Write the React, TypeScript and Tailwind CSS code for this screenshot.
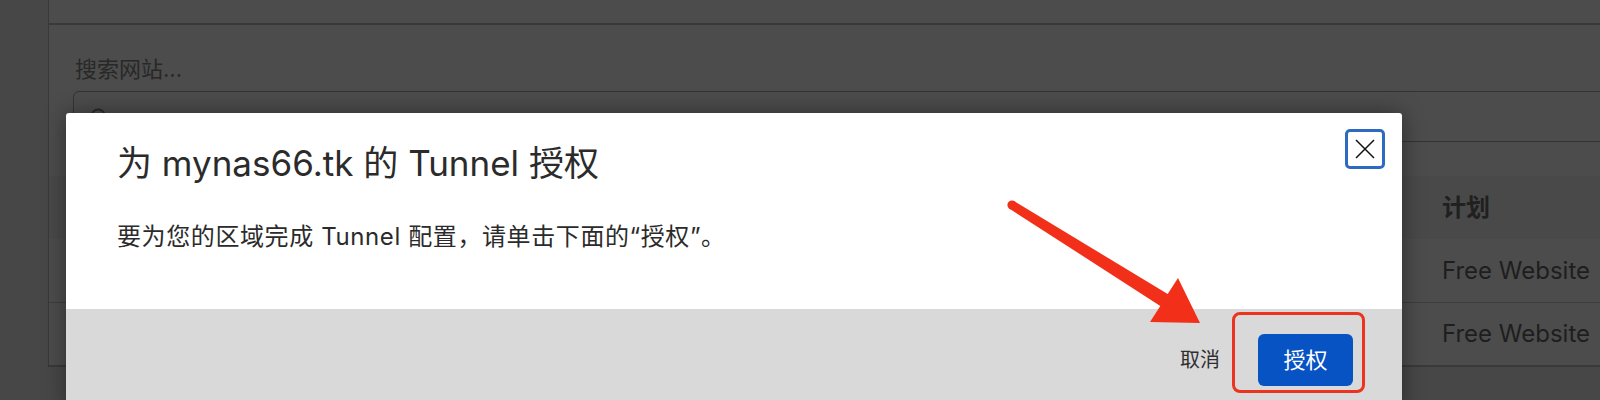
import { Search } from 'lucide-react';

const font = { fontFamily: 'Inter, "Noto Sans CJK SC", sans-serif' };

const rows = ['Free Website', 'Free Website'];

const Arrow = () => (
  <svg
    className="absolute left-[1000px] top-[190px]"
    width="210"
    height="140"
    viewBox="1000 190 210 140"
  >
    <circle cx="1012" cy="205" r="4.6" fill="#f2301a" />
    <polygon
      points="1014.4,201.2 1167.7,294.1 1178,278 1200,323 1150,322 1160.3,305.9 1009.6,208.8"
      fill="#f2301a"
    />
  </svg>
);

const CloseIcon = () => (
  <svg width="20" height="20" viewBox="0 0 20 20" fill="none">
    <path d="M1 1L19 19M19 1L1 19" stroke="#111" strokeWidth="1.5" />
  </svg>
);

export default function App() {
  return (
    <div className="relative h-[400px] w-[1600px] overflow-hidden bg-[#474747]" style={font}>
      {/* page behind the overlay */}
      <div className="w-[1640px] pl-12">
        <div className="h-[25px] border-b-2 border-l border-[#393939] bg-[#4c4c4c]" />
        <div className="h-[342px] border-b-2 border-l border-[#393939] bg-[#4c4c4c] pt-[29px]">
          <p className="pl-[26px] text-[22px] leading-[30px] text-[#282828]">搜索网站...</p>
          <div className="ml-6 mt-[7px] flex h-[51px] items-center rounded-md border border-[#333] pl-[15px]">
            <Search size={20} strokeWidth={2.2} className="text-[#2a2a2a]" />
          </div>
          <div className="mt-[34px]">
            <div className="grid h-[63px] grid-cols-[1393px_1fr] items-center bg-[#494949]">
              <div />
              <span className="text-[24px] font-bold text-[#202020]">计划</span>
            </div>
            {rows.map((r, i) => (
              <div
                key={i}
                className={`grid h-[63px] grid-cols-[1393px_1fr] items-center ${i > 0 ? 'border-t border-[#3d3d3d]' : ''}`}
              >
                <div />
                <span className="whitespace-nowrap text-[24px] text-[#1e1e1e]">{r}</span>
              </div>
            ))}
          </div>
        </div>
      </div>

      {/* dialog */}
      <div className="absolute left-[66px] top-[113px] w-[1336px] rounded-t-[3px] bg-white shadow-[0_0_22px_rgba(0,0,0,0.4)]">
        <div className="relative h-[196px] pl-[51px] pt-[29px]">
          <h2 className="text-[35px] leading-[42px] text-[#2b2b2b]">为 mynas66.tk 的 Tunnel 授权</h2>
          <p className="mt-[38px] text-[24px] leading-[30px] tracking-[0.6px] text-[#2b2b2b]">
            要为您的区域完成 Tunnel 配置，请单击下面的“授权”。
          </p>
          <button className="absolute right-[17px] top-4 flex h-10 w-10 items-center justify-center rounded-[5px] border-[3px] border-[#2d6bc1] bg-white">
            <CloseIcon />
          </button>
        </div>
        <div className="flex h-[102px] items-start justify-end gap-[38px] bg-[#d9d9d9] pr-[49px] pt-[25px]">
          <span className="mt-[13px] text-[20px] leading-[26px] text-[#2f2f2f]">取消</span>
          <button className="flex h-[52px] w-[95px] items-center justify-center rounded-[6px] bg-[#0753c4] text-[22px] text-white">
            授权
          </button>
        </div>
      </div>

      {/* annotation */}
      <div className="absolute left-[1232px] top-[312px] h-[81px] w-[133px] rounded-[8px] border-[3px] border-[#ec3320]" />
      <Arrow />
    </div>
  );
}
